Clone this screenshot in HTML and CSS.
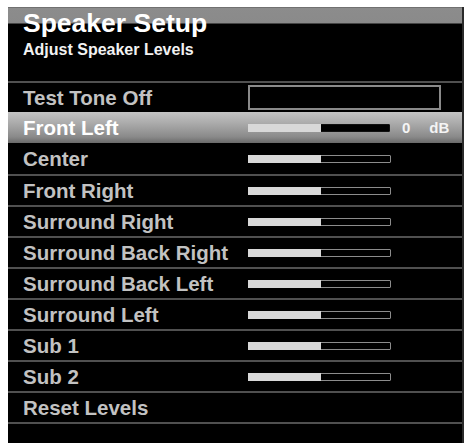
FILE: index.html
```html
<!DOCTYPE html>
<html>
<head>
<meta charset="utf-8">
<link rel="stylesheet" href="styles.css">
</head>
<body>
<div class="panel">
  <div class="header">
    <div class="title">Speaker Setup</div>
    <div class="subtitle">Adjust Speaker Levels</div>
  </div>
  <div class="row">
    <div class="label">Test Tone Off</div>
    <div class="tonebox"></div>
  </div>
  <div class="row sel">
    <div class="label">Front Left</div>
    <div class="bar"><div class="fill"></div></div>
    <div class="val">0</div>
    <div class="unit">dB</div>
  </div>
  <div class="row noline">
    <div class="label">Center</div>
    <div class="bar"><div class="fill"></div></div>
  </div>
  <div class="row">
    <div class="label">Front Right</div>
    <div class="bar"><div class="fill"></div></div>
  </div>
  <div class="row">
    <div class="label">Surround Right</div>
    <div class="bar"><div class="fill"></div></div>
  </div>
  <div class="row">
    <div class="label">Surround Back Right</div>
    <div class="bar"><div class="fill"></div></div>
  </div>
  <div class="row">
    <div class="label">Surround Back Left</div>
    <div class="bar"><div class="fill"></div></div>
  </div>
  <div class="row">
    <div class="label">Surround Left</div>
    <div class="bar"><div class="fill"></div></div>
  </div>
  <div class="row">
    <div class="label">Sub 1</div>
    <div class="bar"><div class="fill"></div></div>
  </div>
  <div class="row">
    <div class="label">Sub 2</div>
    <div class="bar"><div class="fill"></div></div>
  </div>
  <div class="row">
    <div class="label">Reset Levels</div>
  </div>
  <div class="footer"></div>
</div>
</body>
</html>
```

FILE: styles.css
```css
html, body {
  margin: 0;
  padding: 0;
  background: #ffffff;
}
body {
  padding: 7px 0 0 8px;
  font-family: "Liberation Sans", Arial, sans-serif;
  font-weight: bold;
}
.panel {
  width: 456px;
  height: 436px;
  background: #000;
  box-sizing: border-box;
  border-right: 2px solid #2a2a2a;
  overflow: hidden;
}
.header {
  height: 74px;
  box-sizing: border-box;
  padding: 3px 0 0 15px;
  background: linear-gradient(#555 0, #8c8c8c 1px, #8a8a8a 16px, #000 17px);
}
.title {
  color: #fff;
  font-size: 26.5px;
  line-height: 26px;
}
.subtitle {
  color: #f2f2f2;
  font-size: 16px;
  line-height: 16px;
  margin-top: 6px;
}
.row {
  display: flex;
  align-items: center;
  height: 29px;
  border-top: 2px solid #505050;
  padding-left: 15px;
  color: #c2c2c2;
  font-size: 20.5px;
}
.row.sel {
  height: 31px;
  border-top: 0;
  color: #fff;
  background: linear-gradient(#c4c4c4 0%, #a8a8a8 40%, #8a8a8a 80%, #6a6a6a 100%);
}
.row.noline {
  height: 31px;
  border-top: 0;
}
.label {
  width: 225px;
  flex: none;
  white-space: nowrap;
}
.tonebox {
  width: 193px;
  height: 25px;
  box-sizing: border-box;
  border: 2px solid #8a8a8a;
}
.bar {
  width: 143px;
  height: 8px;
  box-sizing: border-box;
  border: 1px solid #8c8c8c;
  border-radius: 1px;
  background: #000;
  display: flex;
}
.fill {
  width: 73px;
  margin: -1px 0 -1px -1px;
  background: #d8d8d8;
}
.sel .bar {
  border-color: #111;
  width: 142px;
}
.val {
  margin-left: 12px;
  font-size: 15px;
  color: #f4f4f4;
}
.unit {
  margin-left: 19px;
  font-size: 15px;
  color: #f4f4f4;
}
.footer {
  border-top: 2px solid #505050;
}
```
